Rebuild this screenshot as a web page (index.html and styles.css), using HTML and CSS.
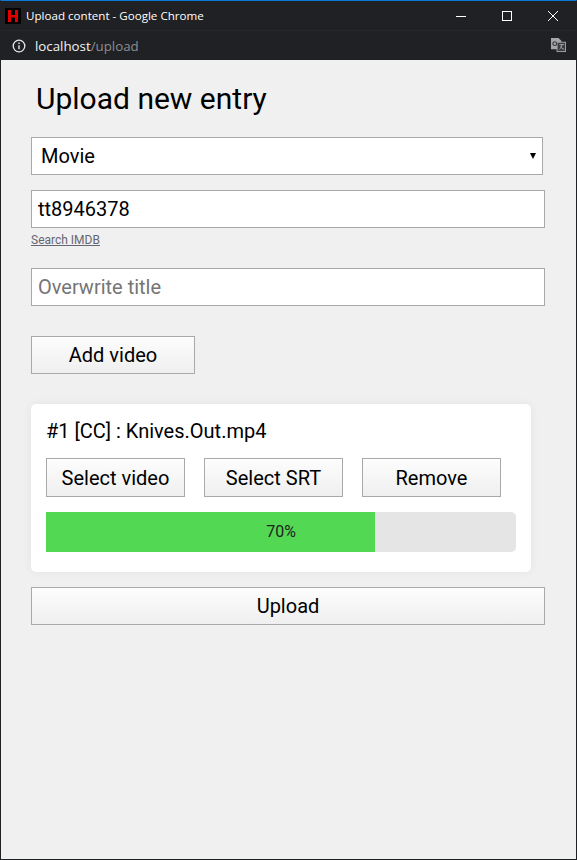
FILE: index.html
```html
<!DOCTYPE html>
<html>

	<head>
		<meta charset="utf-8">

		<title>Upload content</title>
		<link rel="stylesheet" href="styles.css">
	</head>

	<body>
		<div class="window">
			<div class="titlebar">
				<svg class="favicon" width="16" height="16" viewBox="0 0 16 16">
					<rect width="16" height="16" fill="#000"/>
					<path d="M3 2h3v5h4V2h3v12h-3V9.500H6V14H3z" fill="#e00000"/>
				</svg>
				<span class="window_title">Upload content - Google Chrome</span>
				<div class="window_btns">
					<svg width="46" height="30" viewBox="0 0 46 30"><path d="M18 15.500h10" stroke="#fff" fill="none"/></svg>
					<svg width="46" height="30" viewBox="0 0 46 30"><rect x="18.500" y="10.500" width="9" height="9" stroke="#fff" fill="none"/></svg>
					<svg width="46" height="30" viewBox="0 0 46 30"><path d="M18 10l10 10M28 10L18 20" stroke="#fff" fill="none"/></svg>
				</div>
			</div>
			<div class="addressbar">
				<svg class="info" width="14" height="14" viewBox="0 0 14 14">
					<circle cx="7" cy="7" r="5.800" stroke="#e8e8e8" stroke-width="1.300" fill="none"/>
					<path d="M7 6.200v4M7 3.600v1.400" stroke="#e8e8e8" stroke-width="1.400" fill="none"/>
				</svg>
				<span class="url"><span class="host">localhost</span>/upload</span>
				<svg class="translate" width="15" height="15" viewBox="0 0 16 16">
					<path d="M0 0h8l3 3v9H0z" fill="#a6a6a6"/>
					<rect x="6.500" y="4.500" width="9" height="10" fill="#3a3c40" stroke="#a6a6a6"/>
					<circle cx="4" cy="6" r="2" fill="none" stroke="#33353a" stroke-width="1.200"/>
					<path d="M9 7h5M11.500 7c0 2-1 4-2.500 5M10 9c1 1.500 2 2.500 4 3" stroke="#a6a6a6" fill="none"/>
				</svg>
			</div>
			<div class="content">
				<h1>Upload new entry</h1>

				<div class="select_wrap">
					<select class="field select">
						<option>Movie</option>
						<option>Series</option>
					</select>
				</div>

				<input class="field imdb" type="text" value="tt8946378">
				<a class="imdb_link" href="#">Search IMDB</a>

				<input class="field title_input" type="text" placeholder="Overwrite title">

				<button class="btn add_btn">Add video</button>

				<div class="card">
					<div class="card_title">#1 [CC] : Knives.Out.mp4</div>
					<div class="card_btns">
						<button class="btn">Select video</button>
						<button class="btn">Select SRT</button>
						<button class="btn">Remove</button>
					</div>
					<div class="progress">
						<div class="progress_bar" style="width: 70%"></div>
						<span class="progress_text">70%</span>
					</div>
				</div>

				<button class="btn upload_btn">Upload</button>
			</div>
		</div>
	</body>

</html>
```

FILE: styles.css
```css
* {
	margin: 0;
	padding: 0;
	box-sizing: border-box;
}

html,
body {
	height: 100%;
}

body {
	font-family: Roboto, sans-serif;
	background: #202124;
	overflow: hidden;
}

.window {
	height: 860px;
	display: flex;
	flex-direction: column;
	border-top: 1px solid #0a78d7;
	border-left: 1px solid #202124;
	border-right: 1px solid #202124;
	border-bottom: 1px solid #202124;
}

.titlebar {
	height: 30px;
	flex: none;
	display: flex;
	align-items: center;
	padding-left: 4px;
	color: #fff;
	border-bottom: 1px solid #26282b;
}

.favicon {
	flex: none;
}

.window_title {
	margin-left: 5px;
	font-family: "Open Sans", sans-serif;
	font-size: 11.600px;
}

.window_btns {
	margin-left: auto;
	display: flex;
	height: 30px;
}

.addressbar {
	height: 29px;
	flex: none;
	display: flex;
	align-items: center;
	padding: 0 10px 0 11px;
}

.url {
	margin-left: 9px;
	font-family: "Open Sans", sans-serif;
	font-size: 13.300px;
	color: #8c8e91;
}

.host {
	color: #f1f3f4;
}

.translate {
	margin-left: auto;
}

.content {
	flex: 1;
	background: #f0f0f0;
	padding: 0 30px;
	display: flex;
	flex-direction: column;
	align-items: flex-start;
}

h1 {
	font-size: 30px;
	font-weight: 400;
	line-height: 38px;
	margin: 20px 0 19px 5px;
	color: #000;
}

.field {
	display: block;
	height: 38px;
	width: 514px;
	background: #fff;
	border: 1px solid #a9a9a9;
	border-radius: 0;
	font-family: Roboto, sans-serif;
	font-size: 20px;
	color: #000;
	padding: 0 6px;
	outline: none;
}

.field::placeholder {
	color: #757575;
}

.select_wrap {
	position: relative;
	width: 512px;
	margin-bottom: 15px;
}

.select_wrap::after {
	content: "";
	position: absolute;
	right: 7px;
	top: 16px;
	border-left: 3px solid transparent;
	border-right: 3px solid transparent;
	border-top: 6px solid #000;
}

.select {
	width: 512px;
	padding: 0 9px;
	appearance: none;
}

.imdb_link {
	font-size: 12px;
	line-height: 14px;
	margin-top: 5px;
	color: #666673;
}

.title_input {
	margin-top: 21px;
}

.btn {
	height: 38px;
	border: 1px solid #a9a9a9;
	border-radius: 0;
	background: linear-gradient(#fdfdfd, #efefef);
	font-family: Roboto, sans-serif;
	font-size: 20px;
	color: #000;
}

.add_btn {
	width: 164px;
	margin-top: 30px;
}

.card {
	width: 500px;
	height: 168px;
	margin-top: 30px;
	padding: 15px;
	background: #fff;
	border-radius: 5px;
	box-shadow: 0 0 10px rgba(0, 0, 0, 0.06);
}

.card_title {
	font-size: 20px;
	line-height: 24px;
}

.card_btns {
	display: flex;
	gap: 19px;
	margin-top: 15px;
}

.card_btns .btn {
	width: 139px;
	height: 39px;
}

.progress {
	position: relative;
	height: 40px;
	margin-top: 15px;
	background: #e5e5e5;
	border-radius: 5px;
}

.progress_bar {
	height: 100%;
	background: #53d853;
}

.progress_text {
	position: absolute;
	left: 0;
	right: 0;
	top: 0;
	line-height: 40px;
	text-align: center;
	font-size: 16px;
	color: #222;
}

.upload_btn {
	width: 514px;
	margin-top: 15px;
}
```
